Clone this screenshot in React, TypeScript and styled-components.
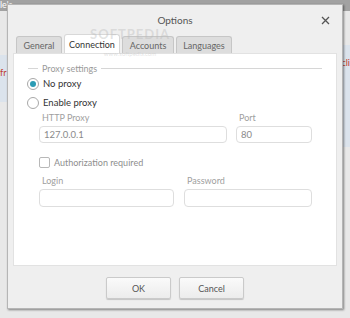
import { createGlobalStyle, styled } from "styled-components";

const Global = createGlobalStyle`
  html, body {
    margin: 0;
    padding: 0;
    width: 350px;
    height: 318px;
    overflow: hidden;
    font-family: Lato, "Open Sans", "Liberation Sans", sans-serif;
  }
`;

/* ---- application behind the dialog ---- */
const Backdrop = styled.div`
  position: relative;
  width: 350px;
  height: 318px;
  display: flex;
  flex-direction: column;
  background: #f3f3f3;
`;
const TopStrip = styled.div`
  height: 11px;
  background: #a2a2a2;
  color: #fff;
  font-size: 9px;
  line-height: 9px;
`;
const Area = styled.div`
  flex: 1;
  display: flex;
  justify-content: space-between;
  background: #e8e8e8;
`;
const SideColumn = styled.div<{ $bandTop: number; $bandHeight: number }>`
  width: 20px;
  display: flex;
  flex-direction: column;
  padding-top: ${(p) => p.$bandTop}px;
  & > div {
    height: ${(p) => p.$bandHeight}px;
  }
`;
const Band = styled.div<{ $align: "left" | "right" }>`
  background: #dbe3ec;
  color: #c0392b;
  font-size: 9px;
  padding-top: 12px;
  text-align: ${(p) => p.$align};
`;

/* ---- dialog ---- */
const Dialog = styled.div`
  position: absolute;
  left: 7px;
  top: 4px;
  width: 334px;
  height: 303px;
  background: #efefef;
  border: 1px solid #b5b5b5;
  box-shadow: 1px 1px 2px rgba(0, 0, 0, 0.45);
  display: flex;
  flex-direction: column;
`;
const TitleBar = styled.div`
  height: 29px;
  display: flex;
  align-items: center;
  justify-content: center;
  position: relative;
  color: #555;
  font-size: 10px;
`;
const Close = styled.button`
  position: absolute;
  right: 12px;
  top: 11px;
  width: 9px;
  height: 9px;
  padding: 0;
  border: 0;
  background: none;
  display: flex;
`;
const TabRow = styled.div`
  height: 19px;
  display: flex;
  align-items: flex-end;
  gap: 2px;
  padding-left: 8px;
`;
const Tab = styled.div<{ $active?: boolean; $w: number }>`
  width: ${(p) => p.$w}px;
  height: ${(p) => (p.$active ? 19 : 17)}px;
  box-sizing: border-box;
  border: 1px solid ${(p) => (p.$active ? "#d8d8d8" : "#c6c6c6")};
  border-bottom: 0;
  border-radius: 3px 3px 0 0;
  background: ${(p) => (p.$active ? "#fff" : "#dddddd")};
  color: ${(p) => (p.$active ? "#333" : "#666")};
  font-size: 9px;
  display: flex;
  align-items: center;
  justify-content: center;
  padding-top: ${(p) => (p.$active ? 0 : 1)}px;
`;
const Panel = styled.div`
  margin: 0 5px;
  height: 213px;
  box-sizing: border-box;
  background: #fff;
  border: 1px solid #e2e2e2;
  padding: 8px 14px 0 13px;
  display: flex;
  flex-direction: column;
`;
const GroupHeader = styled.div`
  height: 12px;
  display: flex;
  align-items: center;
  gap: 4px;
  color: #9a9a9a;
  font-size: 9px;
  padding-left: 1px;
  &::before,
  &::after {
    content: "";
    height: 1px;
    background: #d6d6d6;
  }
  &::before {
    width: 10px;
  }
  &::after {
    flex: 1;
  }
`;
const RadioRow = styled.label`
  height: 19px;
  display: flex;
  align-items: center;
  gap: 4px;
  color: #333;
  font-size: 9.5px;
`;
const RadioCircle = styled.span<{ $on?: boolean }>`
  width: 12px;
  height: 12px;
  box-sizing: border-box;
  border-radius: 50%;
  border: 1px solid #a8a8a8;
  background: #fff;
  display: flex;
  align-items: center;
  justify-content: center;
  &::after {
    content: "";
    width: 6px;
    height: 6px;
    border-radius: 50%;
    background: ${(p) => (p.$on ? "#2c9cb5" : "transparent")};
  }
`;
const Fields = styled.div`
  padding: 0 10px 0 12px;
  display: flex;
  flex-direction: column;
`;
const FieldRow = styled.div<{ $cols: string; $gap: number; $top: number }>`
  display: grid;
  grid-template-columns: ${(p) => p.$cols};
  column-gap: ${(p) => p.$gap}px;
  margin-top: ${(p) => p.$top}px;
`;
const Field = styled.div`
  display: flex;
  flex-direction: column;
  gap: 3px;
`;
const Label = styled.span`
  color: #a0a0a0;
  font-size: 9px;
  line-height: 10px;
  padding-left: 3px;
`;
const Input = styled.div<{ $h: number }>`
  height: ${(p) => p.$h}px;
  box-sizing: border-box;
  border: 1px solid #dedede;
  border-radius: 4px;
  background: #fff;
  color: #8a8a8a;
  font-size: 9.5px;
  display: flex;
  align-items: center;
  padding-left: 4px;
`;
const CheckRow = styled.label`
  margin-top: 13px;
  height: 13px;
  display: flex;
  align-items: center;
  gap: 4px;
  color: #8e8e8e;
  font-size: 9px;
`;
const CheckBox = styled.span`
  width: 11px;
  height: 11px;
  box-sizing: border-box;
  border: 1px solid #b8b8b8;
  border-radius: 2px;
  background: #fff;
`;
const Footer = styled.div`
  flex: 1;
  display: flex;
  justify-content: center;
  align-items: flex-start;
  gap: 8px;
  padding-top: 11px;
`;
const Button = styled.button`
  width: 65px;
  height: 22px;
  border: 1px solid #cacaca;
  border-radius: 2px;
  background: linear-gradient(#fafafa, #ececec);
  box-shadow: 0 1px 1px rgba(0, 0, 0, 0.18);
  color: #555;
  font-family: inherit;
  font-size: 9px;
  padding: 0;
`;
const Watermark = styled.div`
  position: absolute;
  left: 90px;
  top: 27px;
  display: flex;
  flex-direction: column;
  align-items: center;
  pointer-events: none;
  color: rgba(185, 185, 185, 0.4);
`;
const WatermarkBig = styled.span`
  font-size: 13px;
  line-height: 15px;
  letter-spacing: 1px;
  font-weight: 700;
`;
const WatermarkSmall = styled.span`
  font-size: 6px;
  line-height: 7px;
  margin-top: 8px;
`;

export default function App() {
  return (
    <>
      <Global />
      <Backdrop>
        <TopStrip>le's</TopStrip>
        <Area>
          <SideColumn $bandTop={44} $bandHeight={35}>
            <Band $align="left">fr</Band>
          </SideColumn>
          <SideColumn $bandTop={34} $bandHeight={90}>
            <Band $align="right">cli</Band>
          </SideColumn>
        </Area>
        <Dialog>
          <TitleBar>
            Options
            <Close aria-label="Close">
              <svg width="9" height="9" viewBox="0 0 9 9">
                <path d="M1 1L8 8M8 1L1 8" stroke="#555" strokeWidth="1.3" />
              </svg>
            </Close>
          </TitleBar>
          <TabRow>
            <Tab $w={46}>General</Tab>
            <Tab $w={56} $active>
              Connection
            </Tab>
            <Tab $w={52}>Accounts</Tab>
            <Tab $w={56}>Languages</Tab>
          </TabRow>
          <Panel>
            <GroupHeader>Proxy settings</GroupHeader>
            <RadioRow>
              <RadioCircle $on />
              No proxy
            </RadioRow>
            <RadioRow>
              <RadioCircle />
              Enable proxy
            </RadioRow>
            <Fields>
              <FieldRow $cols="188px 76px" $gap={9} $top={1}>
                <Field>
                  <Label>HTTP Proxy</Label>
                  <Input $h={17}>127.0.0.1</Input>
                </Field>
                <Field>
                  <Label>Port</Label>
                  <Input $h={17}>80</Input>
                </Field>
              </FieldRow>
              <CheckRow>
                <CheckBox />
                Authorization required
              </CheckRow>
              <FieldRow $cols="135px 128px" $gap={10} $top={7}>
                <Field>
                  <Label>Login</Label>
                  <Input $h={18} />
                </Field>
                <Field>
                  <Label>Password</Label>
                  <Input $h={18} />
                </Field>
              </FieldRow>
            </Fields>
          </Panel>
          <Footer>
            <Button>OK</Button>
            <Button>Cancel</Button>
          </Footer>
        </Dialog>
        <Watermark>
          <WatermarkBig>SOFTPEDIA</WatermarkBig>
          <WatermarkSmall>www.softpedia.com</WatermarkSmall>
        </Watermark>
      </Backdrop>
    </>
  );
}
